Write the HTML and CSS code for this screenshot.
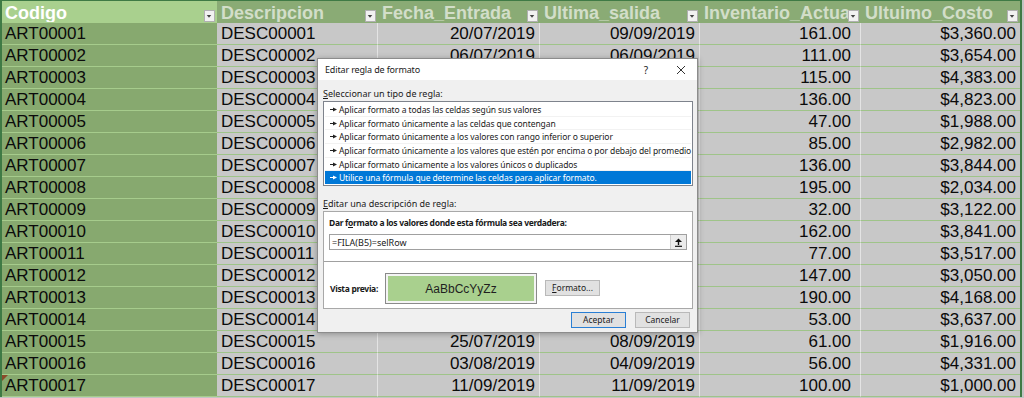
FILE: index.html
```html
<!DOCTYPE html>
<html lang="es">
<head>
<meta charset="utf-8">
<title>Editar regla de formato</title>
<link rel="stylesheet" href="styles.css">
</head>
<body>
<div class="sheet">
  <div class="grid">
    <div class="hc hc-first"><span class="ht">Codigo</span><span class="fb"><svg viewBox="0 0 11 12" width="11" height="12"><path d="M3 5h5l-2.5 3z" fill="#444"/></svg></span></div>
    <div class="hc"><span class="ht">Descripcion</span><span class="fb"><svg viewBox="0 0 11 12" width="11" height="12"><path d="M3 5h5l-2.5 3z" fill="#444"/></svg></span></div>
    <div class="hc"><span class="ht">Fecha_Entrada</span><span class="fb"><svg viewBox="0 0 11 12" width="11" height="12"><path d="M3 5h5l-2.5 3z" fill="#444"/></svg></span></div>
    <div class="hc"><span class="ht">Ultima_salida</span><span class="fb"><svg viewBox="0 0 11 12" width="11" height="12"><path d="M3 5h5l-2.5 3z" fill="#444"/></svg></span></div>
    <div class="hc"><span class="ht">Inventario_Actual</span><span class="fb"><svg viewBox="0 0 11 12" width="11" height="12"><path d="M3 5h5l-2.5 3z" fill="#444"/></svg></span></div>
    <div class="hc hc-last"><span class="ht">Ultuimo_Costo</span><span class="fb"><svg viewBox="0 0 11 12" width="11" height="12"><path d="M3 5h5l-2.5 3z" fill="#444"/></svg></span></div>

    <div class="c code">ART00001</div><div class="c">DESC00001</div><div class="c r">20/07/2019</div><div class="c r">09/09/2019</div><div class="c n">161.00</div><div class="c m">$3,360.00</div>
    <div class="c code">ART00002</div><div class="c">DESC00002</div><div class="c r">06/07/2019</div><div class="c r">06/09/2019</div><div class="c n">111.00</div><div class="c m">$3,654.00</div>
    <div class="c code">ART00003</div><div class="c">DESC00003</div><div class="c r">14/07/2019</div><div class="c r">02/09/2019</div><div class="c n">115.00</div><div class="c m">$4,383.00</div>
    <div class="c code">ART00004</div><div class="c">DESC00004</div><div class="c r">01/08/2019</div><div class="c r">07/09/2019</div><div class="c n">136.00</div><div class="c m">$4,823.00</div>
    <div class="c code">ART00005</div><div class="c">DESC00005</div><div class="c r">22/07/2019</div><div class="c r">05/09/2019</div><div class="c n">47.00</div><div class="c m">$1,988.00</div>
    <div class="c code">ART00006</div><div class="c">DESC00006</div><div class="c r">09/08/2019</div><div class="c r">10/09/2019</div><div class="c n">85.00</div><div class="c m">$2,982.00</div>
    <div class="c code">ART00007</div><div class="c">DESC00007</div><div class="c r">17/07/2019</div><div class="c r">03/09/2019</div><div class="c n">136.00</div><div class="c m">$3,844.00</div>
    <div class="c code">ART00008</div><div class="c">DESC00008</div><div class="c r">28/07/2019</div><div class="c r">08/09/2019</div><div class="c n">195.00</div><div class="c m">$2,034.00</div>
    <div class="c code">ART00009</div><div class="c">DESC00009</div><div class="c r">12/08/2019</div><div class="c r">09/09/2019</div><div class="c n">32.00</div><div class="c m">$3,122.00</div>
    <div class="c code">ART00010</div><div class="c">DESC00010</div><div class="c r">03/07/2019</div><div class="c r">01/09/2019</div><div class="c n">162.00</div><div class="c m">$3,841.00</div>
    <div class="c code">ART00011</div><div class="c">DESC00011</div><div class="c r">19/07/2019</div><div class="c r">06/09/2019</div><div class="c n">77.00</div><div class="c m">$3,517.00</div>
    <div class="c code">ART00012</div><div class="c">DESC00012</div><div class="c r">05/08/2019</div><div class="c r">10/09/2019</div><div class="c n">147.00</div><div class="c m">$3,050.00</div>
    <div class="c code">ART00013</div><div class="c">DESC00013</div><div class="c r">24/07/2019</div><div class="c r">04/09/2019</div><div class="c n">190.00</div><div class="c m">$4,168.00</div>
    <div class="c code">ART00014</div><div class="c">DESC00014</div><div class="c r">30/07/2019</div><div class="c r">07/09/2019</div><div class="c n">53.00</div><div class="c m">$3,637.00</div>
    <div class="c code">ART00015</div><div class="c">DESC00015</div><div class="c r">25/07/2019</div><div class="c r">08/09/2019</div><div class="c n">61.00</div><div class="c m">$1,916.00</div>
    <div class="c code">ART00016</div><div class="c">DESC00016</div><div class="c r">03/08/2019</div><div class="c r">04/09/2019</div><div class="c n">56.00</div><div class="c m">$4,331.00</div>
    <div class="c code note">ART00017</div><div class="c">DESC00017</div><div class="c r">11/09/2019</div><div class="c r">11/09/2019</div><div class="c n">100.00</div><div class="c m">$1,000.00</div>
  </div>

  <div class="dialog">
    <div class="titlebar">
      <span class="title">Editar regla de formato</span>
      <span class="help">?</span>
      <span class="close"><svg viewBox="0 0 10 10" width="10" height="10"><path d="M1 1L9 9M9 1L1 9" stroke="#333" stroke-width="1"/></svg></span>
    </div>
    <div class="dbody">
      <div class="lbl lbl-top"><u>S</u>eleccionar un tipo de regla:</div>
      <div class="list">
        <div class="item"><svg class="arr" viewBox="0 0 7 5" width="7" height="5"><path d="M0 2.5h3.5" stroke="#222" stroke-width="1"/><path d="M3 0.5L7 2.5L3 4.5z" fill="#222"/></svg>Aplicar formato a todas las celdas según sus valores</div>
        <div class="item"><svg class="arr" viewBox="0 0 7 5" width="7" height="5"><path d="M0 2.5h3.5" stroke="#222" stroke-width="1"/><path d="M3 0.5L7 2.5L3 4.5z" fill="#222"/></svg>Aplicar formato únicamente a las celdas que contengan</div>
        <div class="item"><svg class="arr" viewBox="0 0 7 5" width="7" height="5"><path d="M0 2.5h3.5" stroke="#222" stroke-width="1"/><path d="M3 0.5L7 2.5L3 4.5z" fill="#222"/></svg>Aplicar formato únicamente a los valores con rango inferior o superior</div>
        <div class="item"><svg class="arr" viewBox="0 0 7 5" width="7" height="5"><path d="M0 2.5h3.5" stroke="#222" stroke-width="1"/><path d="M3 0.5L7 2.5L3 4.5z" fill="#222"/></svg>Aplicar formato únicamente a los valores que estén por encima o por debajo del promedio</div>
        <div class="item"><svg class="arr" viewBox="0 0 7 5" width="7" height="5"><path d="M0 2.5h3.5" stroke="#222" stroke-width="1"/><path d="M3 0.5L7 2.5L3 4.5z" fill="#222"/></svg>Aplicar formato únicamente a los valores únicos o duplicados</div>
        <div class="item sel"><svg class="arr" viewBox="0 0 7 5" width="7" height="5"><path d="M0 2.5h3.5" stroke="#fff" stroke-width="1"/><path d="M3 0.5L7 2.5L3 4.5z" fill="#fff"/></svg>Utilice una fórmula que determine las celdas para aplicar formato.</div>
      </div>
      <div class="lbl lbl-desc"><u>E</u>ditar una descripción de regla:</div>
      <div class="panel">
        <div class="psec">
          <div class="blbl">Dar f<u>o</u>rmato a los valores donde esta fórmula sea verdadera:</div>
          <div class="input">
            <span class="itext">=FILA(B5)=selRow</span>
            <span class="ibtn"><svg viewBox="0 0 9 9" width="9" height="9"><path d="M4.5 0.5L8 4H1z" fill="#111"/><path d="M4.5 3.5V7" stroke="#111" stroke-width="1.4"/><path d="M1 8.3h7" stroke="#111" stroke-width="1.2"/></svg></span>
          </div>
        </div>
        <div class="psec psec-prev">
          <span class="blbl vlbl">Vista previa:</span>
          <div class="preview"><div class="pinner">AaBbCcYyZz</div></div>
          <span class="btn btn-fmt"><u>F</u>ormato...</span>
        </div>
      </div>
      <div class="actions">
        <span class="btn btn-ok">Aceptar</span>
        <span class="btn">Cancelar</span>
      </div>
    </div>
  </div>
</div>
</body>
</html>
```
FILE: styles.css
```css
* { box-sizing: border-box; }
html, body { margin: 0; padding: 0; }
body { width: 1024px; height: 398px; overflow: hidden; background: #c6c6c6; }

.sheet {
  position: relative;
  width: 1024px;
  height: 398px;
  overflow: hidden;
  background: #c4c4c4;
  font-family: "Liberation Sans", Arial, sans-serif;
}

.grid {
  display: grid;
  grid-template-columns: 215px 161px 162px 160px 161px 159px;
  grid-template-rows: repeat(18, 22px);
  width: 1022px;
  border-left: 2px solid #3f7a45;
  border-right: 2px solid #3f7a45;
  border-top: 1px solid #3f7a45;
}

.hc {
  display: flex;
  align-items: flex-end;
  background: #8aab75;
  color: #d2dec9;
  font-weight: bold;
  font-size: 18px;
  padding: 0 2px 1px 4px;
  overflow: hidden;
}
.hc-first { background: #a9d08e; color: #ffffff; padding-left: 3px; }
.ht {
  flex: 1;
  min-width: 0;
  white-space: nowrap;
  overflow: hidden;
  align-self: stretch;
  line-height: 22px;
  padding-top: 1px;
}
.fb {
  flex: none;
  width: 11px;
  height: 12px;
  background: #f1f1f1;
  border: 1px solid #b0b0b0;
  display: flex;
}
.fb svg { display: block; margin: -1px 0 0 -1px; }

.c {
  position: relative;
  background: #c8c8c8;
  color: #0b0b0b;
  font-size: 17px;
  line-height: 21px;
  padding: 0 4px;
  white-space: nowrap;
  overflow: hidden;
  border-bottom: 1px solid #9fc489;
  border-right: 1px solid #e4e4e4;
}
.code {
  background: #87a96f;
  padding-left: 3px;
  border-right: none;
  border-bottom-color: #a6cc8c;
}
.r { text-align: right; padding-right: 4px; }
.n { text-align: right; padding-right: 9px; }
.m { text-align: right; padding-right: 4px; border-right: none; }
.note::before {
  content: "";
  position: absolute;
  left: 0;
  top: 0;
  border-style: solid;
  border-width: 6px 6px 0 0;
  border-color: #8a4a2a transparent transparent transparent;
}

/* dialog */
.dialog {
  position: absolute;
  left: 317px;
  top: 58px;
  width: 381px;
  height: 275px;
  background: #f0f0f0;
  border: 1px solid #8c8c8c;
  box-shadow: 0 1px 6px rgba(0, 0, 0, 0.3);
  font-family: "Noto Sans", "Open Sans", sans-serif;
  font-size: 9px;
  color: #1a1a1a;
  display: flex;
  flex-direction: column;
}
.titlebar {
  height: 21px;
  background: #ffffff;
  display: flex;
  align-items: center;
  padding-left: 7px;
}
.title { flex: 1; font-size: 9px; letter-spacing: -0.15px; }
.help { width: 10px; text-align: center; margin-right: 25px; font-size: 10px; }
.close { width: 10px; margin-right: 11px; display: flex; }
.close svg { display: block; }

.dbody {
  flex: 1;
  padding: 0 4px 0 5px;
  display: flex;
  flex-direction: column;
}
.lbl { line-height: 12px; }
.lbl-top { margin-top: 8px; }
.list {
  margin-top: 1px;
  height: 85px;
  background: #ffffff;
  border: 1px solid #7e838c;
  display: flex;
  flex-direction: column;
  padding: 1px;
}
.item {
  flex: 1;
  display: flex;
  align-items: center;
  padding-left: 5px;
  white-space: nowrap;
  border-bottom: 1px solid #f2f2f2;
  font-size: 8.5px;
  letter-spacing: -0.1px;
}
.item:last-child { border-bottom: none; }
.arr { flex: none; margin-right: 2px; }
.sel { background: #0078d7; color: #ffffff; }

.lbl-desc { margin-top: 12px; }
.panel {
  margin-top: 1px;
  height: 98px;
  background: #ffffff;
  border: 1px solid #a8a8a8;
  display: flex;
  flex-direction: column;
}
.psec { padding: 5px 5px 0 5px; }
.blbl {
  font-weight: bold;
  font-size: 8.5px;
  letter-spacing: -0.32px;
  line-height: 12px;
  display: block;
  white-space: nowrap;
}
.input {
  margin-top: 5px;
  height: 16px;
  border: 1px solid #a0a0a0;
  display: flex;
  align-items: center;
}
.itext { flex: 1; padding-left: 2px; }
.ibtn {
  width: 16px;
  height: 14px;
  background: #ececec;
  border-left: 1px solid #cfcfcf;
  display: flex;
  align-items: center;
  justify-content: center;
}
.psec-prev {
  flex: 1;
  margin-top: 11px;
  border-top: 1px solid #a0a0a0;
  padding: 11px 5px 0 6px;
  display: flex;
  align-items: flex-start;
}
.vlbl { width: 55px; margin-top: 10px; }
.preview {
  width: 152px;
  height: 31px;
  border: 1px solid #8a8a8a;
  background: #f4f4f4;
  padding: 2px;
}
.pinner {
  height: 100%;
  background: #a9d08e;
  font-family: "Liberation Sans", Arial, sans-serif;
  font-size: 12px;
  color: #1f1f1f;
  display: flex;
  align-items: center;
  justify-content: center;
}
.btn {
  width: 55px;
  height: 16px;
  background: #e1e1e1;
  border: 1px solid #b9b9b9;
  display: flex;
  align-items: center;
  justify-content: center;
  line-height: 1;
  font-size: 8.5px;
}
.btn-fmt { margin-left: 8px; margin-top: 7px; }
.actions {
  margin-top: 3px;
  display: flex;
  justify-content: flex-end;
  gap: 9px;
  padding-right: 3px;
}
.btn-ok { border: 1.5px solid #2a7fd4; }
```
